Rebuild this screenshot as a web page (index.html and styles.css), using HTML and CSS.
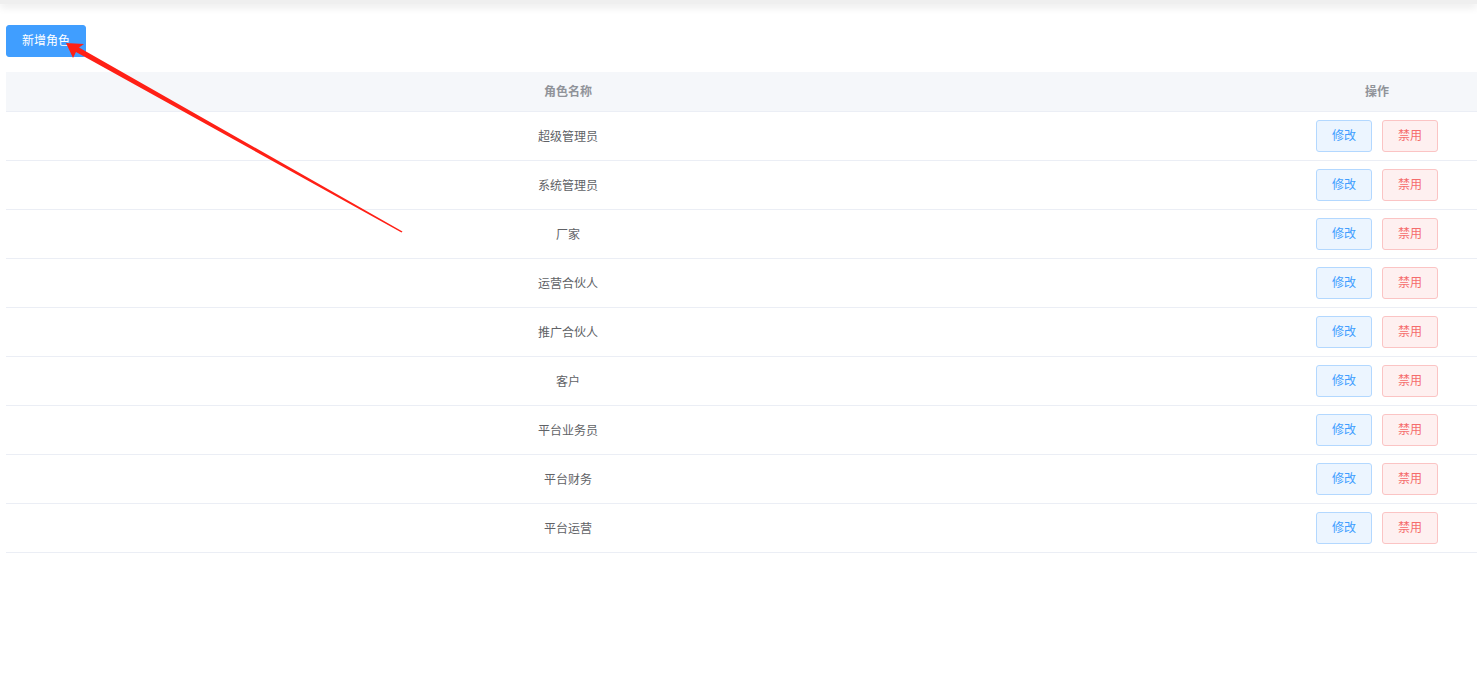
FILE: index.html
```html
<!DOCTYPE html>
<html lang="zh-CN">
<head>
<meta charset="utf-8">
<title>角色管理</title>
<link rel="stylesheet" href="styles.css">
</head>
<body>
<div class="topbar"></div>
<main class="content">
  <div class="toolbar"><button class="btn btn-primary">新增角色</button></div>
  <div class="table-wrap">
    <table class="table">
      <colgroup><col class="c1"><col class="c2"></colgroup>
      <thead><tr><th>角色名称</th><th>操作</th></tr></thead>
      <tbody>
        <tr><td><span class="cell-text">超级管理员</span></td><td><div class="ops"><button class="btn btn-edit">修改</button><button class="btn btn-danger">禁用</button></div></td></tr>
        <tr><td><span class="cell-text">系统管理员</span></td><td><div class="ops"><button class="btn btn-edit">修改</button><button class="btn btn-danger">禁用</button></div></td></tr>
        <tr><td><span class="cell-text">厂家</span></td><td><div class="ops"><button class="btn btn-edit">修改</button><button class="btn btn-danger">禁用</button></div></td></tr>
        <tr><td><span class="cell-text">运营合伙人</span></td><td><div class="ops"><button class="btn btn-edit">修改</button><button class="btn btn-danger">禁用</button></div></td></tr>
        <tr><td><span class="cell-text">推广合伙人</span></td><td><div class="ops"><button class="btn btn-edit">修改</button><button class="btn btn-danger">禁用</button></div></td></tr>
        <tr><td><span class="cell-text">客户</span></td><td><div class="ops"><button class="btn btn-edit">修改</button><button class="btn btn-danger">禁用</button></div></td></tr>
        <tr><td><span class="cell-text">平台业务员</span></td><td><div class="ops"><button class="btn btn-edit">修改</button><button class="btn btn-danger">禁用</button></div></td></tr>
        <tr><td><span class="cell-text">平台财务</span></td><td><div class="ops"><button class="btn btn-edit">修改</button><button class="btn btn-danger">禁用</button></div></td></tr>
        <tr><td><span class="cell-text">平台运营</span></td><td><div class="ops"><button class="btn btn-edit">修改</button><button class="btn btn-danger">禁用</button></div></td></tr>
      </tbody>
    </table>
  </div>
</main>
<svg class="annotation" width="420" height="240" viewBox="0 0 420 240" aria-hidden="true">
  <polygon fill="#ff2016" points="66,43 84,44 79,47.5 402.5,231.5 401.5,232.5 76,52 73,58"/>
</svg>
</body>
</html>
```
FILE: styles.css
```css
html, body {
  margin: 0;
  padding: 0;
  overflow: hidden;
  background: #fff;
}
body {
  font-family: "Noto Sans CJK SC", "Noto Sans", sans-serif;
  font-size: 12px;
  color: #606266;
  position: relative;
  width: 1477px;
  height: 680px;
}
.topbar {
  height: 4px;
  background: #efefef;
  box-shadow: 0 2px 8px rgba(0, 0, 0, 0.15);
}
.content {
  padding: 21px 0 0 6px;
}
.toolbar {
  display: flex;
  margin-bottom: 15px;
}
.btn {
  font-family: inherit;
  font-size: 12px;
  height: 32px;
  border-radius: 3px;
  border: 1px solid transparent;
  padding: 0 0 2px;
  cursor: pointer;
  line-height: 1;
}
.btn-primary {
  width: 80px;
  background: #409eff;
  border-color: #409eff;
  color: #fff;
}
.btn-edit {
  width: 56px;
  background: #ecf5ff;
  border-color: #b3d8ff;
  color: #409eff;
}
.btn-danger {
  width: 56px;
  background: #fef0f0;
  border-color: #fbc4c4;
  color: #f56c6c;
}
.table-wrap {
  width: 1471px;
  overflow: hidden;
}
.table {
  width: 1618px;
  border-collapse: collapse;
  table-layout: fixed;
}
.c1 { width: 1124px; }
.c2 { width: 494px; }
.table th {
  height: 37px;
  padding: 0 0 2px;
  background: #f5f7fa;
  color: #909399;
  font-weight: bold;
  text-align: center;
  border-bottom: 1px solid #ebeef5;
}
.table td {
  height: 48px;
  padding: 0;
  text-align: center;
  border-bottom: 1px solid #ebeef5;
}
.cell-text {
  display: block;
  padding-bottom: 2px;
}
.ops {
  display: flex;
  justify-content: center;
  gap: 10px;
}
.annotation {
  position: absolute;
  left: 0;
  top: 0;
  pointer-events: none;
}
```
